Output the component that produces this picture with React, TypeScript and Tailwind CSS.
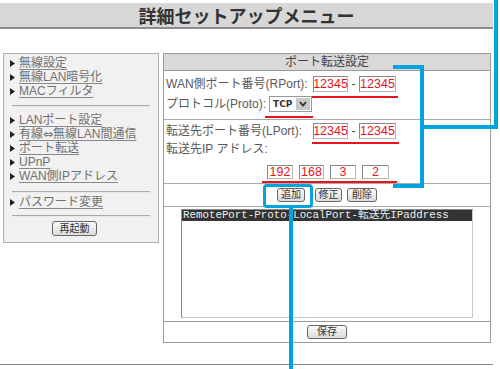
import React from 'react';

const jp = { fontFamily: '"Liberation Sans", "Noto Sans CJK JP", sans-serif' };
const jpTitle = { fontFamily: '"Noto Sans CJK JP", sans-serif' };
const mono = { fontFamily: '"Liberation Mono", "Noto Sans CJK JP", monospace' };

function Arrow() {
  return (
    <svg width="5" height="7" viewBox="0 0 5 7" className="shrink-0 mr-[4px] ml-[1px]">
      <path d="M0 0 L5 3.5 L0 7 Z" fill="#222" />
    </svg>
  );
}

function MenuLink({ label }: { label: React.ReactNode }) {
  return (
    <div className="h-[14px] flex items-center pl-[5px]">
      <Arrow />
      <span className="text-[12px] leading-none text-[#707070] underline underline-offset-2 decoration-[#888] whitespace-nowrap">{label}</span>
    </div>
  );
}

function Sep() {
  return <div className="mx-[8px] h-[2px] border-t border-[#aaa] bg-[#e8e8e8]" />;
}

function NumBox({ value, w }: { value: string; w: string }) {
  return (
    <div
      className={`${w} h-full bg-white border border-[#b5b5b5] border-t-[#888] border-l-[#888] flex items-center justify-center text-[12.5px] leading-none text-[#e8141c]`}
      style={{ fontFamily: '"Liberation Sans", sans-serif' }}
    >
      {value}
    </div>
  );
}

function SmallButton({ label, w }: { label: string; w: string }) {
  return (
    <div className={`${w} h-[14px] rounded-[3px] border border-[#666] bg-gradient-to-b from-[#fafafa] to-[#dcdcdc] flex items-center justify-center text-[10px] leading-none text-[#333]`}>
      {label}
    </div>
  );
}

export default function App() {
  return (
    <div className="relative w-[500px] h-[369px] bg-white overflow-hidden pt-[3px]" style={jp}>
      {/* title bar */}
      <div className="w-[493px] h-[26px] bg-[#d7d7d7] border-b-2 border-[#8c8c8c] flex items-center justify-center">
        <span className="text-[18px] leading-none font-bold text-[#333]" style={jpTitle}>
          詳細セットアップメニュー
        </span>
      </div>

      <div className="flex mt-[24px] items-start">
        {/* left menu */}
        <div className="ml-[3px] w-[156px] h-[190px] bg-[#f1f1f1] border border-[#b0b0b0] pt-[2px]">
          <MenuLink label="無線設定" />
          <MenuLink label="無線LAN暗号化" />
          <MenuLink label="MACフィルタ" />
          <div className="mt-[7px]"><Sep /></div>
          <div className="mt-[6px]">
            <MenuLink label="LANポート設定" />
            <MenuLink
              label={
                <>
                  有線<span style={{ fontFamily: '"DejaVu Sans", sans-serif' }}>⇔</span>無線LAN間通信
                </>
              }
            />
            <MenuLink label="ポート転送" />
            <MenuLink label="UPnP" />
            <MenuLink label="WAN側IPアドレス" />
          </div>
          <div className="mt-[8px]"><Sep /></div>
          <div className="mt-[2px]">
            <MenuLink label="パスワード変更" />
          </div>
          <div className="mt-[6px]"><Sep /></div>
          <div className="mt-[4px] pl-[48px]">
            <SmallButton label="再起動" w="w-[45px] h-[15px]" />
          </div>
        </div>

        {/* right panel */}
        <div className="ml-[4px] w-[328px] border border-[#9a9a9a] flex flex-col">
          <div className="h-[17px] bg-[#d9d9d9] border-b border-[#9a9a9a] flex items-center justify-center text-[12px] leading-none text-[#444]">
            ポート転送設定
          </div>

          <div className="h-[49px] border-b border-[#aaa] pl-[2px] pt-[5px] text-[12px] leading-none text-[#5a5a5a]">
            <div className="h-[16px] flex items-center">
              <span className="w-[147px] whitespace-nowrap">WAN側ポート番号(RPort):</span>
              <NumBox value="12345" w="w-[35px]" />
              <span className="w-[11px] text-center text-[#444]">-</span>
              <NumBox value="12345" w="w-[37px]" />
            </div>
            <div className="h-[16px] mt-[4px] flex items-center">
              <span className="w-[103px] whitespace-nowrap">プロトコル(Proto):</span>
              <div className="w-[43px] h-full border border-[#999] bg-white flex items-center justify-between pl-[3px] pr-[1px]">
                <span className="text-[9px] font-bold text-[#333]" style={{ fontFamily: '"DejaVu Sans", sans-serif' }}>TCP</span>
                <div className="w-[14px] h-[12px] bg-[#c8c8c8] flex items-center justify-center">
                  <svg width="8" height="6" viewBox="0 0 8 6">
                    <path d="M1 1 L4 4.5 L7 1" stroke="#333" strokeWidth="1.8" fill="none" />
                  </svg>
                </div>
              </div>
            </div>
          </div>

          <div className="h-[64px] border-b border-[#aaa] pl-[2px] pt-[3px] text-[12px] leading-none text-[#5a5a5a]">
            <div className="h-[16px] flex items-center">
              <span className="w-[147px] whitespace-nowrap">転送先ポート番号(LPort):</span>
              <NumBox value="12345" w="w-[35px]" />
              <span className="w-[11px] text-center text-[#444]">-</span>
              <NumBox value="12345" w="w-[37px]" />
            </div>
            <div className="h-[16px] mt-[2px] flex items-center">転送先IP アドレス:</div>
            <div className="h-[14px] mt-[8px] flex items-center gap-[6px] pl-[101px]">
              <NumBox value="192" w="w-[26px]" />
              <NumBox value="168" w="w-[25px]" />
              <NumBox value="3" w="w-[26px]" />
              <NumBox value="2" w="w-[27px]" />
            </div>
          </div>

          <div className="h-[23px] border-b border-[#aaa] flex items-center justify-center">
            <SmallButton label="追加" w="w-[28px]" />
            <div className="ml-[10px]"><SmallButton label="修正" w="w-[27px]" /></div>
            <div className="ml-[5px]"><SmallButton label="削除" w="w-[30px]" /></div>
          </div>

          <div className="h-[115px] border-b border-[#9a9a9a] pt-[2px] pl-[17px]">
            <div className="w-[292px] h-[109px] bg-white border border-[#c8c8c8] border-t-[#8a8a8a] border-l-[#8a8a8a]">
              <div className="h-[11px] bg-[#333] flex items-center pl-[1px] text-[10.8px] leading-none text-[#eee] whitespace-nowrap" style={mono}>
                RemotePort-Proto-LocalPort-転送先IPaddress
              </div>
            </div>
          </div>

          <div className="h-[20px] flex items-center justify-center">
            <SmallButton label="保存" w="w-[40px]" />
          </div>
        </div>
      </div>

      <div className="mt-[21px] w-[493px] border-t border-[#888]" />

      {/* red annotation underlines */}
      <div className="absolute left-[312px] top-[96px] w-[86px] h-[2px] bg-[#e8141c]" />
      <div className="absolute left-[265px] top-[116px] w-[48px] h-[2px] bg-[#e8141c]" />
      <div className="absolute left-[312px] top-[142px] w-[87px] h-[2px] bg-[#e8141c]" />
      <div className="absolute left-[262px] top-[181px] w-[135px] h-[2px] bg-[#e8141c]" />

      {/* blue annotation lines */}
      <div className="absolute left-[494px] top-0 w-[4px] h-[129px] bg-[#00a3e0]" />
      <div className="absolute left-[421px] top-[125px] w-[77px] h-[4px] bg-[#00a3e0]" />
      <div className="absolute left-[393px] top-[65px] w-[31px] h-[4px] bg-[#00a3e0]" />
      <div className="absolute left-[420px] top-[65px] w-[4px] h-[123px] bg-[#00a3e0]" />
      <div className="absolute left-[393px] top-[184px] w-[31px] h-[4px] bg-[#00a3e0]" />
      <div className="absolute left-[263px] top-[184px] w-[50px] h-[24px] border-[3px] border-[#00a3e0] rounded-[4px]" />
      <div className="absolute left-[289px] top-[207px] w-[4px] h-[162px] bg-[#00a3e0]" />
    </div>
  );
}
